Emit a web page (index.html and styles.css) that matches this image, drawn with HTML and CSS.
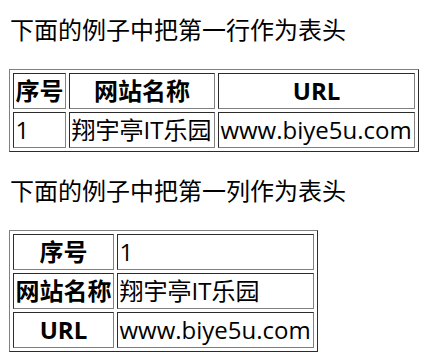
FILE: index.html
```html
<!DOCTYPE html>
<html lang="zh-CN">
<head>
<meta charset="utf-8">
<title>表头示例</title>
<link rel="stylesheet" href="styles.css">
</head>
<body>
<p class="intro">下面的例子中把第一行作为表头</p>
<table class="grid">
  <tr><th>序号</th><th>网站名称</th><th>URL</th></tr>
  <tr><td>1</td><td>翔宇亭IT乐园</td><td>www.biye5u.com</td></tr>
</table>
<p class="intro">下面的例子中把第一列作为表头</p>
<table class="grid">
  <tr><th>序号</th><td>1</td></tr>
  <tr><th>网站名称</th><td>翔宇亭IT乐园</td></tr>
  <tr><th>URL</th><td>www.biye5u.com</td></tr>
</table>
</body>
</html>
```
FILE: styles.css
```css
html, body {
  background: #fff;
}
body {
  margin: 0;
  padding: 14px 9px 0 9px;
  font-family: "Open Sans", "Noto Sans CJK SC", sans-serif;
  font-size: 24px;
  line-height: 32px;
  color: #000;
}
.intro {
  margin: 0 0 23px 0;
  padding-left: 1px;
}
.grid {
  border: 1px outset gray;
  border-collapse: separate;
  border-spacing: 3px;
  margin-bottom: 23px;
}
.grid th,
.grid td {
  border: 1px inset gray;
  padding: 1px 1.5px;
  line-height: 32px;
}
.grid th {
  font-weight: bold;
  text-align: center;
}
.grid td {
  text-align: left;
  padding-right: 2.5px;
}
```
